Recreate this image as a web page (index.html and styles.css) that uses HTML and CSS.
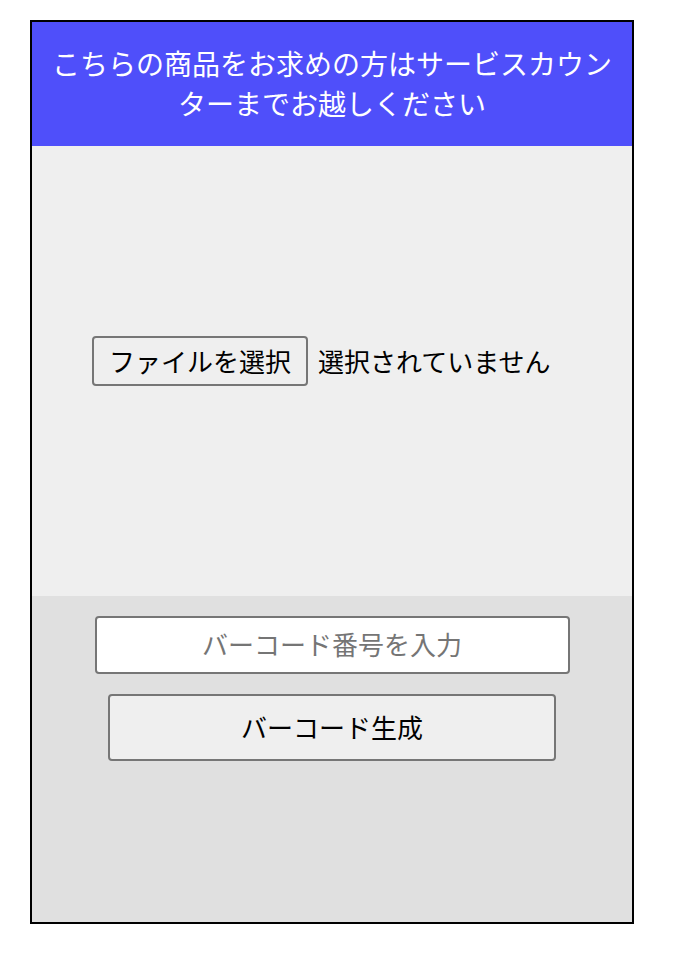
FILE: index.html
```html
<!DOCTYPE html>
<html lang="ja">
<head>
    <meta charset="UTF-8">
    <meta name="viewport" content="width=device-width, initial-scale=1.0">
    <link rel="stylesheet" href="styles.css">
</head>
<body>

<div id="frame">
    <div id="notice">こちらの商品をお求めの方はサービスカウンターまでお越しください</div>

    <div id="upload">
        <label class="filePick">
            <input type="file" id="fileInput" accept="image/*">
            <span class="fileButton">ファイルを選択</span>
            <span class="fileName" id="fileName">選択されていません</span>
        </label>
    </div>

    <div id="generator">
        <input type="text" id="barcodeInput" placeholder="バーコード番号を入力">
        <button id="generateButton" onclick="generateBarcode()">バーコード生成</button>
    </div>
</div>

<script>
    document.getElementById('fileInput').addEventListener('change', (event) => {
        const file = event.target.files[0];
        document.getElementById('fileName').innerText = file ? file.name : '選択されていません';
    });

    function generateBarcode() {
        const value = document.getElementById('barcodeInput').value;
        if (!value) {
            return;
        }
        // barcode drawing goes here
    }
</script>

</body>
</html>
```

FILE: styles.css
```css
body {
    margin: 20px 30px;
    font-family: "Noto Sans CJK JP", "Noto Sans", sans-serif;
}
#frame {
    width: 600px;
    height: 900px;
    border: 2px solid #000;
    display: flex;
    flex-direction: column;
}
#notice {
    background: #4f4ffa;
    color: #fff;
    font-size: 28px;
    line-height: 40px;
    text-align: center;
    padding: 21px 16px 23px;
}
#upload {
    height: 450px;
    padding-bottom: 20px;
    box-sizing: border-box;
    background: #efefef;
    display: flex;
    align-items: center;
    justify-content: center;
}
.filePick {
    width: 480px;
    display: flex;
    align-items: center;
    gap: 10px;
    font-size: 26px;
    line-height: 30px;
    cursor: pointer;
}
.filePick input {
    display: none;
}
.fileButton {
    width: 216px;
    height: 50px;
    box-sizing: border-box;
    border: 2px solid #767676;
    border-radius: 4px;
    background: #efefef;
    display: flex;
    align-items: center;
    justify-content: center;
}
#generator {
    flex: 1;
    background: #e0e0e0;
    display: flex;
    flex-direction: column;
    align-items: center;
    gap: 20px;
    padding-top: 20px;
}
#barcodeInput {
    width: 475px;
    height: 58px;
    box-sizing: border-box;
    border: 2px solid #767676;
    border-radius: 4px;
    background: #fff;
    font-family: inherit;
    font-size: 26px;
    text-align: center;
    padding: 0 0 4px;
}
#barcodeInput::placeholder {
    color: #757575;
}
#generateButton {
    width: 448px;
    height: 67px;
    box-sizing: border-box;
    border: 2px solid #767676;
    border-radius: 4px;
    background: #efefef;
    font-family: inherit;
    font-size: 26px;
    color: #000;
    padding: 0 0 3px;
}
```
